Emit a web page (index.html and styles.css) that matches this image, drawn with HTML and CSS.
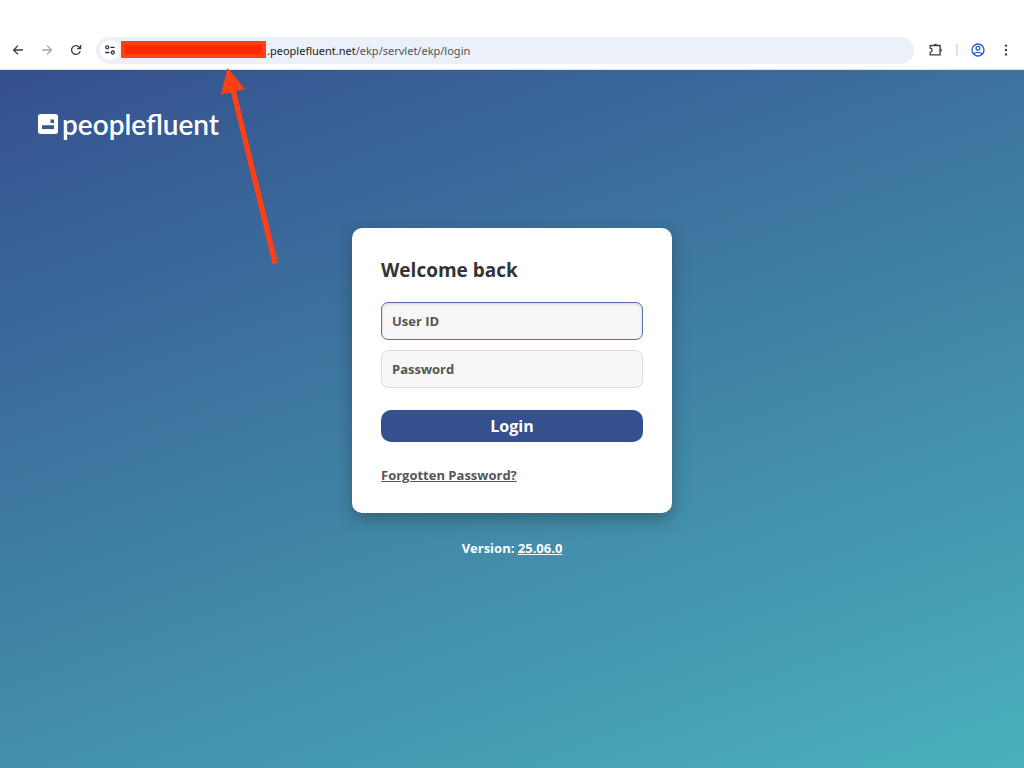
FILE: index.html
```html
<!DOCTYPE html>
<html lang="en">
<head>
<meta charset="utf-8">
<title>Login</title>
<link rel="stylesheet" href="styles.css">
</head>
<body>
<header class="toolbar">
  <nav class="nav-buttons">
    <button class="icon-button" type="button" aria-label="Back"><svg viewBox="0 0 12 12" width="12" height="12"><path d="M10.8 6H1.8M6 1.6L1.6 6L6 10.4"/></svg></button>
    <button class="icon-button muted" type="button" aria-label="Forward"><svg viewBox="0 0 12 12" width="12" height="12"><path d="M1.2 6H10.2M6 1.6L10.4 6L6 10.4"/></svg></button>
    <button class="icon-button" type="button" aria-label="Reload"><svg viewBox="0 0 12 12" width="12" height="12"><path d="M10.2 7.2A4.4 4.4 0 1 1 9.4 3.2L10.4 4.3M10.6 1V4.5H7.1"/></svg></button>
  </nav>
  <div class="address">
    <button class="site-info" type="button" aria-label="Site information"><svg viewBox="0 0 12 12" width="12" height="12"><circle cx="3.2" cy="3.3" r="1.5"/><path d="M6.4 3.3H10.6M1.2 8.5H5.4"/><circle cx="8.8" cy="8.5" r="1.5"/></svg></button>
    <span class="redaction"></span>
    <span class="url"><span class="host">.peoplefluent.net</span>/ekp/servlet/ekp/login</span>
  </div>
  <div class="tools">
    <button class="icon-button" type="button" aria-label="Extensions"><svg viewBox="0 0 14 14" width="14" height="14"><path d="M1.2 2.5H11.1V11.8H1.2V9.2C3.8 9 3.8 5.5 1.2 5.2Z"/><path class="solid" d="M4.8 2.4A1.7 1.7 0 0 1 8.2 2.4ZM11.2 5.5A1.7 1.7 0 0 1 11.2 8.9Z"/></svg></button>
    <span class="divider"></span>
    <button class="icon-button profile" type="button" aria-label="Profile"><svg viewBox="0 0 14 14" width="14" height="14"><circle cx="7" cy="7" r="6"/><circle cx="7" cy="5.3" r="1.9"/><path d="M2.8 11C5 8.9 9 8.9 11.2 11"/></svg></button>
    <button class="icon-button" type="button" aria-label="Menu"><svg viewBox="0 0 12 12" width="12" height="12"><g class="solid"><circle cx="6" cy="1.6" r="1.2"/><circle cx="6" cy="6" r="1.2"/><circle cx="6" cy="10.4" r="1.2"/></g></svg></button>
  </div>
</header>
<main class="page">
  <div class="brand">
    <svg viewBox="0 0 20 20" width="20" height="20" aria-hidden="true"><path fill="#fff" fill-rule="evenodd" d="M2.500 0H17.500Q20 0 20 2.500V17.500Q20 20 17.500 20H2.500Q0 20 0 17.500V2.500Q0 0 2.500 0ZM12.500 5.500V9H16V5.500ZM4 11.300V15H16V11.300Z"/></svg>
    <span>peoplefluent</span>
  </div>
  <form class="card">
    <h1>Welcome back</h1>
    <input class="field active" type="text" placeholder="User ID" aria-label="User ID">
    <input class="field" type="password" placeholder="Password" aria-label="Password">
    <button class="login" type="button">Login</button>
    <a class="forgot" href="#">Forgotten Password?</a>
  </form>
  <p class="version">Version: <a href="#">25.06.0</a></p>
</main>
<svg class="arrow" viewBox="0 0 56 200" width="56" height="200" aria-hidden="true"><path fill="#ff4015" d="M7.5 0L25 21L16 23L58 195L52.5 196L11 24.5L1 26.5Z"/></svg>
</body>
</html>
```
FILE: styles.css
```css
* { box-sizing: border-box; }

body {
  margin: 0;
  min-height: 100vh;
  display: flex;
  flex-direction: column;
  position: relative;
  font-family: "Open Sans", "Noto Sans", sans-serif;
  font-size: 13px;
}

button {
  border: 0;
  padding: 0;
  background: none;
  font: inherit;
}

svg { display: block; overflow: visible; }

.toolbar {
  display: flex;
  align-items: center;
  gap: 14px;
  height: 70px;
  padding: 31px 10px 0;
  background: #fff;
  border-bottom: 1px solid #dfe3e6;
}

.nav-buttons, .tools { display: flex; align-items: center; }
.nav-buttons { gap: 13px; padding-bottom: 1px; margin-right: -2px; }

.icon-button {
  width: 16px;
  height: 16px;
  display: grid;
  place-items: center;
  color: #3c3c3c;
}

.icon-button svg, .site-info svg {
  fill: none;
  stroke: currentColor;
  stroke-width: 1.3;
}

.icon-button .solid { fill: currentColor; stroke: none; }
.muted { color: #a4a4a4; }
.profile { color: #1d5bd0; }

.address {
  flex: 1;
  display: flex;
  align-items: center;
  height: 27px;
  padding-left: 4px;
  border-radius: 14px;
  background: #ebf0f9;
}

.site-info {
  width: 20px;
  height: 20px;
  display: grid;
  place-items: center;
  border-radius: 50%;
  background: #fff;
  color: #333;
}

.redaction {
  width: 145px;
  height: 17px;
  margin: 0 1px 2px;
  border: 4px solid #ff4015;
  background: #ff2800;
}

.url {
  font-family: "Noto Sans", sans-serif;
  font-size: 11px;
  color: #505357;
}
.host { color: #202124; }

.tools { gap: 12px; }
.divider { width: 2px; height: 12px; background: #d5e2fb; }

.page {
  flex: 1;
  display: flex;
  flex-direction: column;
  align-items: center;
  padding: 38px;
  background: linear-gradient(160deg, #35508f 0%, #4ab1bb 100%);
}

.brand {
  align-self: flex-start;
  display: flex;
  align-items: center;
  gap: 4px;
  height: 32px;
  color: #fff;
  font-family: Lato, sans-serif;
  font-size: 28px;
  font-weight: 600;
  line-height: 32px;
}

.card {
  width: 320px;
  max-width: 100%;
  margin-top: 88px;
  padding: 28px 29px;
  display: flex;
  flex-direction: column;
  background: #fff;
  border-radius: 10px;
  box-shadow: 0 6px 16px rgba(40, 50, 60, 0.45);
}

h1 {
  margin: 0 0 18px;
  font-size: 19px;
  line-height: 28px;
  color: #333;
}

.field {
  width: 100%;
  height: 38px;
  margin-bottom: 10px;
  padding: 0 10px;
  border: 1px solid #dcdcdc;
  border-radius: 7px;
  background: #f7f7f7;
  font: bold 13px "Open Sans", sans-serif;
  color: #555;
}
.field::placeholder { color: #555; opacity: 1; }
.field.active {
  border-color: #5570ab;
  box-shadow: inset 0 1px 3px rgba(0, 0, 0, 0.15);
}

.login {
  height: 32px;
  margin: 12px 0 24px;
  border-radius: 10px;
  background: #34508f;
  color: #fff;
  font-size: 16px;
  font-weight: 700;
}

.forgot {
  align-self: flex-start;
  font-weight: bold;
  line-height: 19px;
  color: #555;
}

.version {
  margin: 26px 0 0;
  line-height: 19px;
  font-weight: bold;
  color: #fff;
}
.version a { color: inherit; }

.arrow { position: absolute; left: 220px; top: 68px; pointer-events: none; }
```
